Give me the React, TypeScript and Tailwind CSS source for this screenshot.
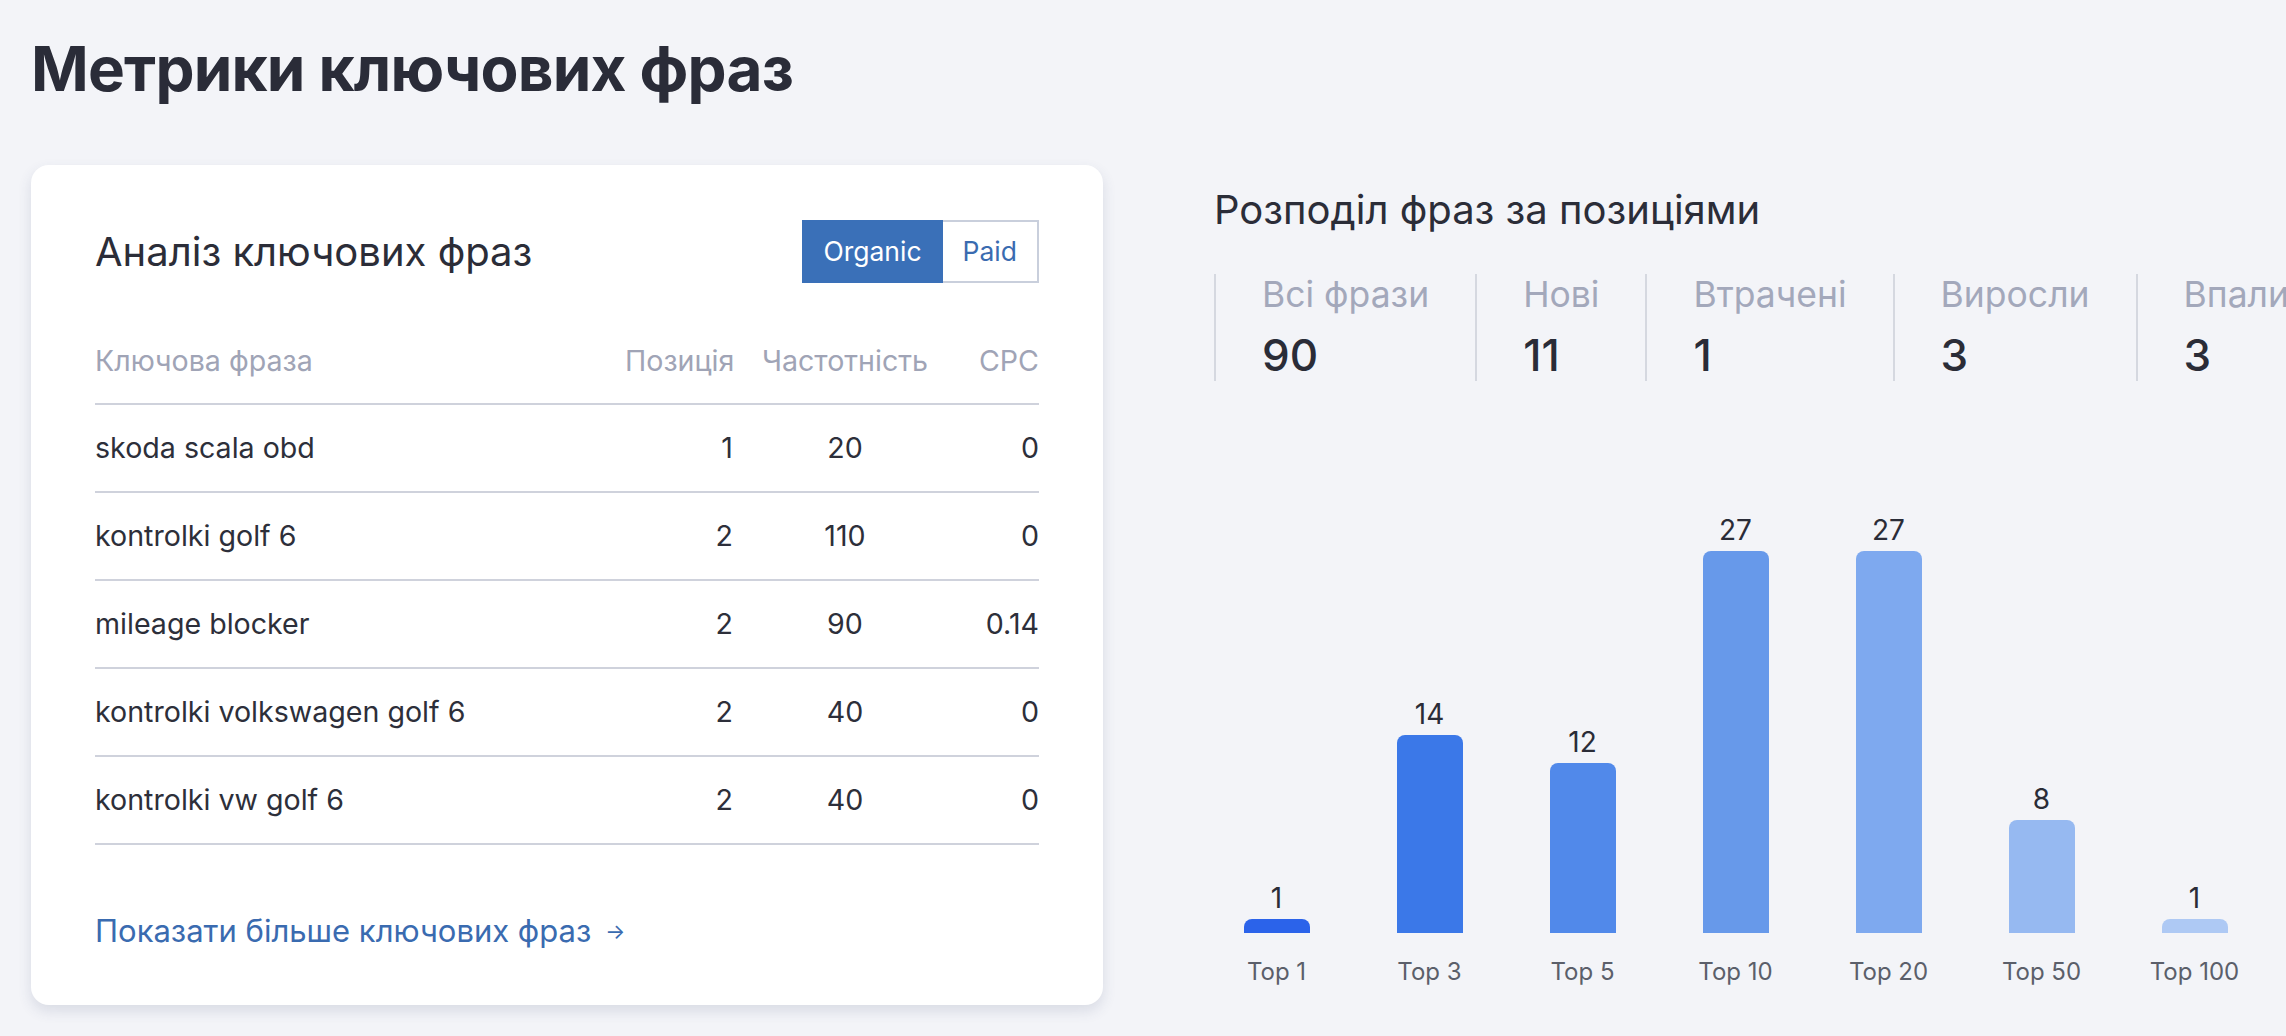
import React from 'react';

// Keyword metrics page - table card on the left, position distribution on the right

interface KeywordRow {
    phrase: string;
    position: number;
    volume: number;
    cpc: string;
}

const rows: KeywordRow[] = [
    { phrase: 'skoda scala obd', position: 1, volume: 20, cpc: '0' },
    { phrase: 'kontrolki golf 6', position: 2, volume: 110, cpc: '0' },
    { phrase: 'mileage blocker', position: 2, volume: 90, cpc: '0.14' },
    { phrase: 'kontrolki volkswagen golf 6', position: 2, volume: 40, cpc: '0' },
    { phrase: 'kontrolki vw golf 6', position: 2, volume: 40, cpc: '0' },
];

const stats = [
    { label: 'Всі фрази', value: 90 },
    { label: 'Нові', value: 11 },
    { label: 'Втрачені', value: 1 },
    { label: 'Виросли', value: 3 },
    { label: 'Впали', value: 3 },
];

const bars = [
    { label: 'Top 1', value: 1, color: 'bg-[#2b63ea]' },
    { label: 'Top 3', value: 14, color: 'bg-[#3b78e8]' },
    { label: 'Top 5', value: 12, color: 'bg-[#5189ea]' },
    { label: 'Top 10', value: 27, color: 'bg-[#6799ea]' },
    { label: 'Top 20', value: 27, color: 'bg-[#7ea9ef]' },
    { label: 'Top 50', value: 8, color: 'bg-[#96b9f1]' },
    { label: 'Top 100', value: 1, color: 'bg-[#aec9f4]' },
];

const MAX_BAR = 382;

const App: React.FC = () => {
    const maxValue = Math.max(...bars.map((b) => b.value));

    return (
        <div
            className="min-h-screen w-full overflow-hidden bg-[#f3f4f8] text-[#2b2d38] pl-[31px]"
            style={{ fontFamily: 'Inter, "Noto Sans", sans-serif' }}
        >
            <h1 className="pt-[38px] text-[62px] leading-none font-bold tracking-[-0.8px] text-[#2a2c38]">
                Метрики ключових фраз
            </h1>

            <div className="mt-[65px] flex items-start">
                {/* Keyword table card */}
                <div className="w-[1072px] shrink-0 rounded-[18px] bg-white shadow-[0_6px_14px_rgba(60,70,110,0.14)] px-[64px] pt-[55px] pb-[53px]">
                    <div className="flex items-center justify-between">
                        <h2 className="text-[40px] leading-tight font-normal text-[#2b2d38]">Аналіз ключових фраз</h2>
                        <div className="flex h-[63px] text-[26.5px]">
                            <button className="h-full px-[19px] bg-[#3a70b8] border-2 border-[#3a70b8] text-white">
                                Organic
                            </button>
                            <button className="h-full px-[20px] bg-white border-2 border-l-0 border-[#c9cfdc] text-[#3a6bb0]">
                                Paid
                            </button>
                        </div>
                    </div>

                    {/* Table */}
                    <div className="mt-[57px] text-[28.6px]">
                        <div className="flex items-center pb-[21px] border-b-2 border-[#cfd2dc] text-[#a0a4b6] leading-[42px]">
                            <div className="flex-1">Ключова фраза</div>
                            <div className="w-[108px] text-right">Позиція</div>
                            <div className="w-[170px] ml-[27px] text-center">Частотність</div>
                            <div className="w-[109px] text-right">CPC</div>
                        </div>
                        {rows.map((row) => (
                            <div
                                key={row.phrase}
                                className="flex items-center h-[88px] border-b-2 border-[#cfd2dc] text-[#2d2f3a]"
                            >
                                <div className="flex-1">{row.phrase}</div>
                                <div className="w-[108px] text-right">{row.position}</div>
                                <div className="w-[170px] ml-[27px] text-center">{row.volume}</div>
                                <div className="w-[109px] text-right">{row.cpc}</div>
                            </div>
                        ))}
                    </div>

                    <a className="mt-[65px] inline-flex items-center gap-[14px] text-[31px] leading-[42px] text-[#3a6bb0]">
                        Показати більше ключових фраз
                        <span className="text-[21px] leading-none">→</span>
                    </a>
                </div>

                {/* Position distribution */}
                <div className="ml-[111px] pt-[21px] flex-1 min-w-0">
                    <h2 className="text-[40px] leading-[1.2] text-[#2b2d38]">Розподіл фраз за позиціями</h2>

                    <div className="mt-[40px] flex whitespace-nowrap">
                        {stats.map((s) => (
                            <div key={s.label} className="shrink-0 border-l-2 border-[#d5d8e0] px-[46px]">
                                <div className="text-[35.5px] leading-[1.2] text-[#a3a8bb]">{s.label}</div>
                                <div className="mt-[12px] text-[44px] leading-[1.2] font-medium text-[#2a2c37]">
                                    {s.value}
                                </div>
                            </div>
                        ))}
                    </div>

                    {/* Bar chart */}
                    <div className="mt-[72px] -ml-[14px] flex items-end h-[480px]">
                        {bars.map((b) => (
                            <div key={b.label} className="w-[153px] shrink-0 flex flex-col items-center">
                                <div className="text-[28px] leading-none text-[#2a2c37] mb-[7px]">{b.value}</div>
                                <div
                                    className={`w-[66px] rounded-t-[8px] ${b.color}`}
                                    style={{ height: Math.round((b.value / maxValue) * MAX_BAR) }}
                                />
                            </div>
                        ))}
                    </div>
                    <div className="-ml-[14px] mt-[21px] flex">
                        {bars.map((b) => (
                            <div
                                key={b.label}
                                className="w-[153px] shrink-0 text-center text-[24px] leading-[36px] text-[#5b5f6a]"
                            >
                                {b.label}
                            </div>
                        ))}
                    </div>
                </div>
            </div>
        </div>
    );
};

export default App;
